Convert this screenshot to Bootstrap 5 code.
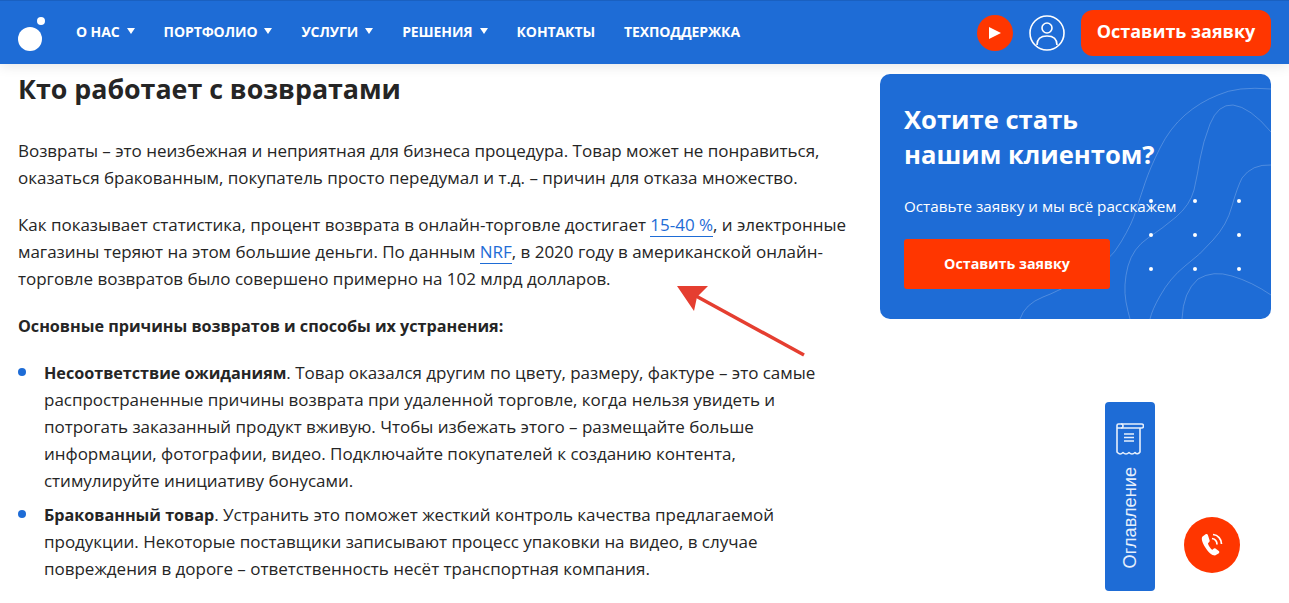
<!DOCTYPE html>
<html lang="ru">
<head>
<meta charset="utf-8">
<title>Кто работает с возвратами</title>
<link href="https://cdn.jsdelivr.net/npm/bootstrap@5.3.0/dist/css/bootstrap.min.css" rel="stylesheet">
<style>
html,body{height:603px;overflow:hidden}
body{font-family:"Open Sans","Noto Sans",sans-serif;color:#252525;background:#fff}
.topbar{height:64px;background:#1e6cd6;border-top:1px solid #1a60c0;box-shadow:0 2px 12px rgba(0,0,0,.1);padding:0 18px 0 17px;position:relative;z-index:2}
.logo-svg{width:30px;height:34px;margin-top:2px;margin-right:29px;flex:none}
.menu-link{font-family:"Open Sans",sans-serif;font-size:14px;font-weight:700;color:#fff;text-decoration:none;margin-right:29px;padding-bottom:3px;white-space:nowrap;letter-spacing:-.1px;display:flex;align-items:center}
.menu-link i{display:block;margin-left:7px;border:4px solid transparent;border-top:6px solid #fff;border-bottom:0;width:0;height:0}
.play-circle{width:36px;height:36px;border-radius:50%;background:#ff3600;margin-right:16px}
.user-svg{width:36px;height:36px;margin-right:16px}
.cta-top{background:#ff3600;color:#fff;font-size:18px;font-weight:700;width:190px;height:46px;border-radius:12px;border:0;padding:0 0 3px;white-space:nowrap}
.page-wrap{padding-left:18px;height:539px;overflow:hidden}
.article-col{width:862px;flex:none;font-size:17px;letter-spacing:-.02px;line-height:27px;white-space:nowrap}
.article-col b{font-size:16.200px;line-height:1}
.art-title{font-size:26.800px;font-weight:700;line-height:34px;margin:8px 0 31px}
.art-p{margin-bottom:20px}
.art-p a{color:#1e6cd6;text-decoration:none;border-bottom:1px solid #1e6cd6}
.art-list{list-style:none;padding:0;margin:0}
.art-list li{position:relative;padding-left:26px;margin-bottom:7px}
.art-list li::before{content:"";position:absolute;left:0;top:9px;width:8px;height:8px;border-radius:50%;background:#1e6cd6}
.promo{width:391px;height:245px;margin-top:10px;background:#1e6cd6;border-radius:10px;position:relative;overflow:hidden;color:#fff;padding:28px 24px}
.promo-bg{position:absolute;inset:0;width:391px;height:245px}
.promo-title{font-size:25.600px;font-weight:700;line-height:35px;margin:0 0 24px;position:relative}
.promo-sub{font-size:15.200px;line-height:20px;margin:0 0 23px;position:relative;white-space:nowrap}
.promo-btn{background:#ff3600;color:#fff;border:0;border-radius:3px;width:206px;height:50px;font-size:14.300px;font-weight:700;position:relative;padding:0}
.arrow-svg{position:absolute;left:670px;top:280px;width:140px;height:80px;z-index:1}
.toc-tab{position:fixed;left:1105px;top:402px;width:50px;height:189px;background:#1e6cd6;border-radius:4px;color:#e6effc;z-index:3}
.toc-tab svg{width:28px;height:32px;margin-top:21px}
.toc-text{writing-mode:vertical-rl;transform:rotate(180deg);font-family:"Liberation Sans",sans-serif;font-size:18.200px;line-height:20px;margin-top:12px}
.call-btn{position:fixed;left:1184px;top:517px;width:56px;height:56px;border-radius:50%;background:#ff3600;z-index:3}
</style>
</head>
<body>
<nav class="topbar d-flex align-items-center">
  <svg class="logo-svg" viewBox="0 0 30 34"><circle cx="13" cy="22" r="12" fill="#fff"/><circle cx="24" cy="4" r="4" fill="#fff"/></svg>
  <a class="menu-link" href="#">О НАС<i></i></a>
  <a class="menu-link" href="#">ПОРТФОЛИО<i></i></a>
  <a class="menu-link" href="#">УСЛУГИ<i></i></a>
  <a class="menu-link" href="#">РЕШЕНИЯ<i></i></a>
  <a class="menu-link" href="#">КОНТАКТЫ</a>
  <a class="menu-link" href="#">ТЕХПОДДЕРЖКА</a>
  <div class="play-circle ms-auto d-flex align-items-center justify-content-center">
    <svg width="12" height="12" viewBox="0 0 12 12"><path d="M0 0L12 6L0 12Z" fill="#fff"/></svg>
  </div>
  <svg class="user-svg" viewBox="0 0 36 36" fill="none" stroke="#fff" stroke-width="1.6"><circle cx="18" cy="18" r="17"/><circle cx="18" cy="13" r="5"/><path d="M8 30c0-6 4-9 10-9s10 3 10 9"/></svg>
  <button class="cta-top" type="button">Оставить заявку</button>
</nav>
<svg class="arrow-svg" viewBox="0 0 140 80"><path d="M134 75L26 16" stroke="#e53e30" stroke-width="3.500" fill="none"/><path d="M7 6L38 6L27 17L24 31Z" fill="#e53e30"/></svg>
<div class="page-wrap d-flex">
  <main class="article-col">
    <h2 class="art-title">Кто работает с возвратами</h2>
    <p class="art-p">Возвраты – это неизбежная и неприятная для бизнеса процедура. Товар может не понравиться,<br>оказаться бракованным, покупатель просто передумал и т.д. – причин для отказа множество.</p>
    <p class="art-p">Как показывает статистика, процент возврата в онлайн-торговле достигает <a href="#">15-40 %</a>, и электронные<br>магазины теряют на этом большие деньги. По данным <a href="#">NRF</a>, в 2020 году в американской онлайн-<br>торговле возвратов было совершено примерно на 102 млрд долларов.</p>
    <p class="art-p"><b>Основные причины возвратов и способы их устранения:</b></p>
    <ul class="art-list">
      <li><b>Несоответствие ожиданиям</b>. Товар оказался другим по цвету, размеру, фактуре – это самые<br>распространенные причины возврата при удаленной торговле, когда нельзя увидеть и<br>потрогать заказанный продукт вживую. Чтобы избежать этого – размещайте больше<br>информации, фотографии, видео. Подключайте покупателей к созданию контента,<br>стимулируйте инициативу бонусами.</li>
      <li><b>Бракованный товар</b>. Устранить это поможет жесткий контроль качества предлагаемой<br>продукции. Некоторые поставщики записывают процесс упаковки на видео, в случае<br>повреждения в дороге – ответственность несёт транспортная компания.</li>
    </ul>
  </main>
  <aside class="promo">
    <svg class="promo-bg" viewBox="0 0 391 245" fill="none" stroke="#fff" stroke-opacity=".22">
      <path d="M391 15Q357 12 338 21Q320 28 305 41Q290 54 280 74Q270 94 265 109Q260 124 256 136Q253 148 241 168Q230 188 203 203Q177 218 163 223Q145 230 140 245"/>
      <path d="M391 58Q370 33 353 31Q338 30 330 50Q323 68 320 85Q318 98 314 116Q310 131 296 143Q283 154 268 164Q253 174 248 192Q243 211 246 228Q248 238 250 245"/>
      <path d="M391 91Q372 90 362 104Q357 114 352 132Q347 151 333 166Q320 181 305 192Q290 204 280 222Q272 236 270 245"/>
      <path d="M391 221Q372 208 352 202Q333 196 318 205Q303 218 302 245"/>
      <g fill="#fff" stroke="none">
        <circle cx="271" cy="127" r="2"/><circle cx="315" cy="127" r="2"/><circle cx="359" cy="127" r="2"/>
        <circle cx="271" cy="161" r="2"/><circle cx="315" cy="161" r="2"/><circle cx="359" cy="161" r="2"/>
        <circle cx="271" cy="195" r="2"/><circle cx="315" cy="195" r="2"/><circle cx="359" cy="195" r="2"/>
      </g>
    </svg>
    <h3 class="promo-title">Хотите стать<br>нашим клиентом?</h3>
    <p class="promo-sub">Оставьте заявку и мы всё расскажем</p>
    <button class="promo-btn" type="button">Оставить заявку</button>
  </aside>
</div>
<div class="toc-tab d-flex flex-column align-items-center">
  <svg viewBox="0 0 28 32" fill="none" stroke="#e6effc" stroke-width="1.600" stroke-linejoin="round"><path d="M1 5V2.500A1.500 1.500 0 0 1 2.500 1H25.500A1.500 1.500 0 0 1 25.500 5H1"/><path d="M5 1A2 2 0 0 1 5 5"/><path d="M1 5V29C3 31.500 5 31.500 7 29.500C9 31.500 11 31.500 13 29.500C15 31.500 17 31.500 19 29.500C20.500 31.500 22.500 31 24 29V5"/><path d="M8 11H18M8 14.500H18M8 18H18"/></svg>
  <span class="toc-text">Оглавление</span>
</div>
<div class="call-btn d-flex align-items-center justify-content-center">
  <svg width="24" height="26" viewBox="0 0 24 26"><path d="M6 2L2.500 4.500C1 6 2 10 5 15C8 20 12 23.500 15 23.500L18.500 21.500C19.500 20.800 19.500 19.500 18.800 19L15.500 16.500C14.800 16 14 16.200 13.500 16.800L12.500 17.800C11 17.500 8 13 8 11.200L9.200 10C9.800 9.400 9.800 8.600 9.500 8L7.800 2.800C7.500 2 6.700 1.700 6 2Z" fill="#fff"/><path d="M12 6.500C15 7 17 9.500 17 12.500M13 2.500C18 3 21.500 7 21.500 12" fill="none" stroke="#fff" stroke-width="1.700"/></svg>
</div>
<script src="https://cdn.jsdelivr.net/npm/bootstrap@5.3.0/dist/js/bootstrap.bundle.min.js"></script>
</body>
</html>
